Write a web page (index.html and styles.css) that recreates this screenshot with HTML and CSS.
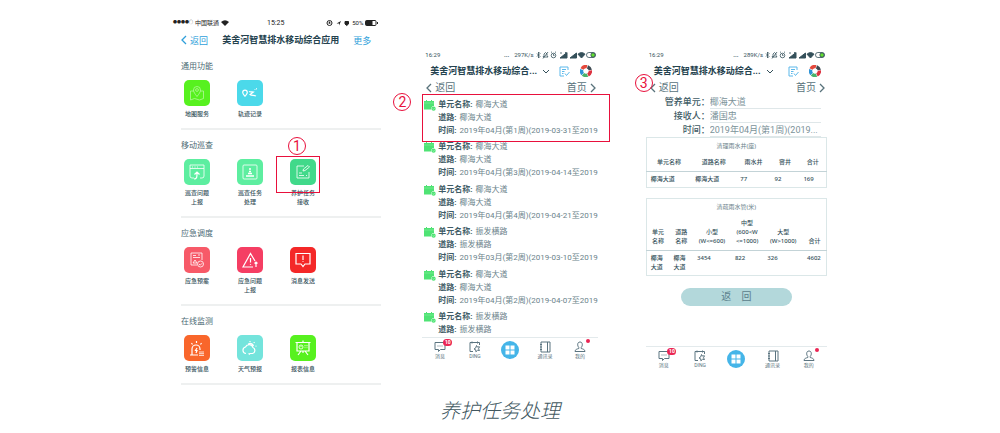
FILE: index.html
```html
<!DOCTYPE html>
<html lang="zh-CN">
<head>
  <meta charset="UTF-8">
  <meta name="viewport" content="width=device-width, initial-scale=1.0">
  <link rel="stylesheet" href="styles.css">
  <title>养护任务处理</title>
</head>
<body>
  <!-- 公用图标 -->
  <svg class="sprite" aria-hidden="true">
    <symbol id="i-left" viewBox="0 0 6 10"><path d="M5 1 1 5l4 4"/></symbol>
    <symbol id="i-right" viewBox="0 0 6 10"><path d="m1 1 4 4-4 4"/></symbol>
    <symbol id="i-down" viewBox="0 0 8 5"><path d="m1 1 3 3 3-3"/></symbol>
    <symbol id="i-wifi" viewBox="0 0 8 6"><path d="M4 6 0 2q4-3.600 8 0z" fill="currentColor" stroke="none"/></symbol>
    <symbol id="i-note" viewBox="0 0 11 11"><path d="M9 4V1H1v9h4M3 3.500h4M3 5.500h2.500M3 7.500h1.500M6 7.500l1.500 2L10.500 6"/></symbol>
    <symbol id="i-wheel" viewBox="0 0 12 12">
      <g fill="none" stroke-width="3.400">
        <path d="M2 4a4.400 4.400 0 0 1 5-2.300" stroke="#e4483b"/>
        <path d="M7.500 1.800A4.400 4.400 0 0 1 10.300 5" stroke="#3f4a52"/>
        <path d="M10.400 5.500A4.400 4.400 0 0 1 8 9.900" stroke="#dc3340"/>
        <path d="M7.500 10.200A4.400 4.400 0 0 1 3 9.300" stroke="#49b26b"/>
        <path d="M2.700 9A4.400 4.400 0 0 1 1.800 4.600" stroke="#2f94d6"/>
      </g>
    </symbol>
    <symbol id="i-signals" viewBox="0 0 60 8">
      <g fill="none" stroke="currentColor" stroke-width=".8">
        <path d="m1 2.500 3 3-1.500 1.500V1L4 2.500l-3 3"/>
        <path d="M7 6h5L11 4.500V3L9.500 1.500 8 3v1.500zM7 7.500 12 1"/>
        <circle cx="17.500" cy="4.500" r="2.300"/><path d="M17.500 3v1.500h1M15 1.500l1-.7M20 1.500l-1-.7"/>
        <path d="M24 2h2M29.500 1v1.500"/>
        <rect x="50.500" y="1.500" width="9" height="5" rx="2.400"/>
      </g>
      <path d="M24 7h7V1.500zM34 7h6.500V2z" fill="currentColor"/>
      <path d="M45.500 7 42 3.200q3.500-3.200 7 0z" fill="currentColor"/>
      <rect x="55" y="2" width="4" height="4" rx="1.500" fill="#62e02f"/>
    </symbol>
    <symbol id="i-calendar" viewBox="0 0 12 11">
      <path d="M0 1h2V0h1v1h4V0h1v1h2v5a2.500 2.500 0 0 0-2.500 3.500H0z" fill="#4fe374"/>
      <path d="M0 3h10" stroke="#8cf0a3" stroke-width=".6"/>
      <circle cx="9.600" cy="8.700" r="2.100" fill="#4fe374"/><path d="m8.700 8.700.7.700 1.200-1.300" fill="none" stroke="#d8ffe0" stroke-width=".5"/>
    </symbol>
    <symbol id="i-chat" viewBox="0 0 12 12"><path d="M1 1.500h10v7H6.500L4.500 10.500v-2H1z"/><path d="M3.500 5h1M5.500 5h1M7.500 5h1"/></symbol>
    <symbol id="i-ding" viewBox="0 0 12 12"><path d="M4 10.500H1v-9h9.500V4M3 .5v2M8.500 .5v2"/><path d="m7.500 4.500.8 1.500 2.200-.2-1 2 1 1.700-2-.2-1.600 1.500-.2-2-1.700-.8 1.700-1z"/></symbol>
    <symbol id="i-book" viewBox="0 0 12 12"><path d="M2 1h9v10H2zM8.500 1v10M1 3.500h2M1 6h2M1 8.500h2"/></symbol>
    <symbol id="i-user" viewBox="0 0 12 12"><path d="M6 1C3 1 3.300 5 4.800 6.500v1C3 8 1 8.500 1 10.500h10c0-2-2-2.500-3.800-3v-1C8.700 5 9 1 6 1z"/></symbol>
  </svg>

  <figure>
    <div class="screens">

      <!-- 第一步：应用首页 -->
      <section class="phone home">
        <div class="status">
          <span class="carrier"><i>●●●●○</i> 中国联通 <svg class="wifi"><use href="#i-wifi"/></svg></span>
          <span class="clock">15:25</span>
          <span class="power">
            <svg class="gps" viewBox="0 0 24 8"><circle cx="3.500" cy="4" r="2.500"/><path d="M2.500 4h2M3.500 2.500v2"/><path d="M10.500 4.500 15 2l-2 4.500V4.500z" fill="currentColor" stroke="none"/><path d="M19 2.500h3.500V5L20.700 6.500 19 5z" fill="currentColor"/></svg>
            50%
            <svg class="battery" viewBox="0 0 13 6"><rect x=".5" y=".5" width="10.500" height="5" rx="1"/><path d="M1 1h6v4H1z" fill="currentColor"/><path d="M12.500 2v2"/></svg>
          </span>
        </div>
        <header>
          <a href="#"><svg class="arrow"><use href="#i-left"/></svg>返回</a>
          <h1>美舍河智慧排水移动综合应用</h1>
          <a href="#">更多</a>
        </header>

        <div class="group">
          <h2>通用功能</h2>
          <div class="tiles">
            <a class="tile" href="#"><svg class="lime faint" viewBox="0 0 26 26"><path d="M10 11H6.500v9l4-1.500 5 1.500 4-1.500V11H16"/><path d="M13 16.500c-2-2.500-3.500-4.500-3.500-6.500a3.500 3.500 0 0 1 7 0c0 2-1.500 4-3.500 6.500z"/><circle cx="13" cy="10" r="1.400"/></svg>地图服务</a>
            <a class="tile" href="#"><svg class="sky" viewBox="0 0 26 26"><path class="thick" d="M8 16.500c-1.500-2-2.300-3-2.300-4a2.300 2.300 0 0 1 4.600 0c0 1-1 2-2.300 4M12 11.500c1.500.8 3 0 4.500.5L13 14.500c1.500 1.500 4 .5 6 1.500"/><path d="M17.500 9.500h1M19.500 8v1.500"/></svg>轨迹记录</a>
          </div>
        </div>

        <div class="group">
          <h2>移动巡查</h2>
          <div class="tiles">
            <a class="tile" href="#"><svg class="mint" viewBox="0 0 26 26"><path d="M10 19H8a2 2 0 0 1-2-2V6h14v11a2 2 0 0 1-2 2h-2M6 9.500h14M8 8h1M10.500 8h1M13 8h1"/><path class="thick" d="M10 20c3 0 3-2 3-6M10.500 15.500l2.500-2.500 2.500 2.500"/></svg>巡查问题<br>上报</a>
            <a class="tile" href="#"><svg class="mint" viewBox="0 0 26 26"><rect x="6" y="6" width="14" height="14" rx="1"/><path d="M13 9v2M12 12.500h2M11 14.500h4M9 17h8" stroke-width="1.500"/></svg>巡查任务<br>处理</a>
            <a class="tile marked" href="#"><svg class="jade" viewBox="0 0 26 26"><path d="M14 7H7v12h12v-6M9 14h3M9 16.500h5M16 16.500h1M13 12l.5-2L18 6.500l1.500 1.500-4.500 3.500z"/></svg>养护任务<br>接收<b class="step step-1">1</b></a>
          </div>
        </div>

        <div class="group">
          <h2>应急调度</h2>
          <div class="tiles">
            <a class="tile" href="#"><svg class="coral" viewBox="0 0 26 26"><path d="M13 18H7V6h11v7M9 8.500h3M14 8h2M9 10.500h7M9 16l2-3 2 3z"/><circle cx="16.500" cy="17" r="3"/><path d="m15 17 1.200 1.200 2-2"/></svg>应急预案</a>
            <a class="tile" href="#"><svg class="rose" viewBox="0 0 26 26"><path class="thick" d="M16 20H6l7.500-13.500L18 14M13.500 11v4.500M13.500 17.200v.8M19 20v-5M17.500 16.500 19 15l1.500 1.500"/></svg>应急问题<br>上报</a>
            <a class="tile" href="#"><svg class="red" viewBox="0 0 26 26"><path class="thick" d="M9 17H6V6.500h14V17h-5l-2 2.500L11 17H9M13 8.500v4.500M13 14.200v.8"/></svg>消息发送</a>
          </div>
        </div>

        <div class="group">
          <h2>在线监测</h2>
          <div class="tiles">
            <a class="tile" href="#"><svg class="orange" viewBox="0 0 26 26"><path class="thick" d="M6 20h8M8 20v-6a4 4 0 0 1 8 0v1M13 13l-1.500 2.500H13L12 18M12.500 6v2M7.500 8l1 1.500M17.500 8l-1 1.500"/><path d="M15 17h5M15 18.700h5M15 20.400h5"/></svg>预警信息</a>
            <a class="tile" href="#"><svg class="aqua" viewBox="0 0 26 26"><path class="thick" d="M9 18.500a3.300 3.300 0 0 1-.5-6.500 4 4 0 0 1 7.500.5 3.200 3.200 0 0 1-.5 6h-3M13 19.500l-1.500-1M11 9.500c2-2 5-1 5.500 1.500"/><path class="thick" d="M13 6v1M17.500 7l-.7 1M19.500 11l-1 .3"/></svg>天气预报</a>
            <a class="tile" href="#"><svg class="lime" viewBox="0 0 26 26"><path class="thick" d="M5.500 7.500h15M7 7.500V16h12V7.500M13 5.500v2M11 16l-3 4M15 16l3 4M13 16v2"/><circle cx="11" cy="12" r="2"/><path d="M11 12v-2M15 10v3.500M17 10v3.500" stroke-dasharray="1 .7"/></svg>报表信息</a>
          </div>
        </div>
      </section>

      <!-- 第二步：任务列表 -->
      <section class="phone tasks">
        <div class="status">
          <span>16:29</span>
          <span><b>...</b> 297K/s<svg class="signals"><use href="#i-signals"/></svg></span>
        </div>
        <header>
          <h1>美舍河智慧排水移动综合...</h1>
          <svg class="down"><use href="#i-down"/></svg>
          <svg class="note"><use href="#i-note"/></svg>
          <svg class="wheel"><use href="#i-wheel"/></svg>
        </header>
        <nav class="pager">
          <a href="#"><svg class="arrow"><use href="#i-left"/></svg>返回</a>
          <a href="#">首页<svg class="arrow"><use href="#i-right"/></svg></a>
        </nav>
        <div class="list-wrap">
          <b class="step step-2">2</b>
          <ul class="list">
            <li><svg><use href="#i-calendar"/></svg><p><b>单元名称:</b> 椰海大道</p><p><b>道路:</b> 椰海大道</p><p><b>时间:</b> 2019年04月(第1周)(2019-03-31至2019</p></li>
            <li><svg><use href="#i-calendar"/></svg><p><b>单元名称:</b> 椰海大道</p><p><b>道路:</b> 椰海大道</p><p><b>时间:</b> 2019年04月(第3周)(2019-04-14至2019</p></li>
            <li><svg><use href="#i-calendar"/></svg><p><b>单元名称:</b> 椰海大道</p><p><b>道路:</b> 椰海大道</p><p><b>时间:</b> 2019年04月(第4周)(2019-04-21至2019</p></li>
            <li><svg><use href="#i-calendar"/></svg><p><b>单元名称:</b> 振发横路</p><p><b>道路:</b> 振发横路</p><p><b>时间:</b> 2019年03月(第2周)(2019-03-10至2019</p></li>
            <li><svg><use href="#i-calendar"/></svg><p><b>单元名称:</b> 椰海大道</p><p><b>道路:</b> 椰海大道</p><p><b>时间:</b> 2019年04月(第2周)(2019-04-07至2019</p></li>
            <li><svg><use href="#i-calendar"/></svg><p><b>单元名称:</b> 振发横路</p><p><b>道路:</b> 振发横路</p></li>
          </ul>
        </div>
        <nav class="tabs">
          <a href="#"><svg><use href="#i-chat"/></svg>消息<em>10</em></a>
          <a href="#"><svg><use href="#i-ding"/></svg>DING</a>
          <a class="main" href="#" aria-label="工作"><svg viewBox="0 0 18 18"><path d="M4.500 4.500h4v4h-4zM9.500 4.500h4v4h-4zM4.500 9.500h4v4h-4zM9.500 9.500h4v4h-4z"/></svg></a>
          <a href="#"><svg><use href="#i-book"/></svg>通讯录</a>
          <a href="#"><svg><use href="#i-user"/></svg>我的<em class="dot"></em></a>
        </nav>
      </section>

      <!-- 第三步：任务详情 -->
      <section class="phone detail">
        <div class="status">
          <span>16:29</span>
          <span><b>...</b> 289K/s<svg class="signals"><use href="#i-signals"/></svg></span>
        </div>
        <header>
          <h1>美舍河智慧排水移动综合...</h1>
          <svg class="down"><use href="#i-down"/></svg>
          <svg class="note"><use href="#i-note"/></svg>
          <svg class="wheel"><use href="#i-wheel"/></svg>
        </header>
        <nav class="pager">
          <b class="step step-3">3</b>
          <a href="#"><svg class="arrow"><use href="#i-left"/></svg>返回</a>
          <a href="#">首页<svg class="arrow"><use href="#i-right"/></svg></a>
        </nav>
        <form>
          <label for="unit">管养单元：</label><input id="unit" type="text" value="椰海大道">
          <label for="receiver">接收人：</label><input id="receiver" type="text" value="潘国忠">
          <label for="time">时间：</label><input id="time" type="text" value="2019年04月(第1周)(2019...">
        </form>

        <table class="wells">
          <caption>清理雨水井(座)</caption>
          <colgroup><col class="w-name"><col class="w-name"><col class="w-rain"><col class="w-pit"><col></colgroup>
          <thead>
            <tr><th>单元名称</th><th>道路名称</th><th>雨水井</th><th>窨井</th><th>合计</th></tr>
          </thead>
          <tbody>
            <tr><td>椰海大道</td><td>椰海大道</td><td>77</td><td>92</td><td>169</td></tr>
          </tbody>
        </table>

        <table class="pipes">
          <caption>清疏雨水管(米)</caption>
          <colgroup><col class="p-name"><col class="p-name"><col class="p-small"><col class="p-mid"><col class="p-big"><col></colgroup>
          <thead>
            <tr><th>单元<br>名称</th><th>道路<br>名称</th><th>小型<br>(W&lt;=600)</th><th>中型<br>(600&lt;W<br>&lt;=1000)</th><th>大型<br>(W&gt;1000)</th><th>合计</th></tr>
          </thead>
          <tbody>
            <tr><td>椰海<br>大道</td><td>椰海<br>大道</td><td>3454</td><td>822</td><td>326</td><td>4602</td></tr>
          </tbody>
        </table>

        <button class="back" type="button">返&emsp;回</button>

        <nav class="tabs">
          <a href="#"><svg><use href="#i-chat"/></svg>消息<em>10</em></a>
          <a href="#"><svg><use href="#i-ding"/></svg>DING</a>
          <a class="main" href="#" aria-label="工作"><svg viewBox="0 0 18 18"><path d="M4.500 4.500h4v4h-4zM9.500 4.500h4v4h-4zM4.500 9.500h4v4h-4zM9.500 9.500h4v4h-4z"/></svg></a>
          <a href="#"><svg><use href="#i-book"/></svg>通讯录</a>
          <a href="#"><svg><use href="#i-user"/></svg>我的<em class="dot"></em></a>
        </nav>
      </section>

    </div>
    <figcaption>养护任务处理</figcaption>
  </figure>
</body>
</html>
```

FILE: styles.css
```css
* {
  box-sizing: border-box;
}

body {
  margin: 0;
  background: #fff;
  color: #34505a;
  font-family: Roboto, "Noto Sans CJK SC", sans-serif;
}

a {
  color: inherit;
  text-decoration: none;
}

h1, h2, p, ul, figure {
  margin: 0;
  padding: 0;
}

svg {
  fill: none;
  stroke: currentColor;
  flex: none;
}

.sprite {
  position: absolute;
  width: 0;
  height: 0;
}

.screens {
  display: grid;
  grid-template-columns: 208fr 175fr 188fr;
  column-gap: 41px;
  align-items: start;
  padding: 17px 17.3% 0;
}

.phone {
  min-width: 0;
}

.tasks, .detail {
  margin-top: 32px;
}

.detail {
  margin-left: 7px;
}

/* 状态栏和标题栏 */
.status {
  display: flex;
  justify-content: space-between;
  align-items: center;
  height: 12px;
  padding: 0 2px 0 3px;
  font-size: 6px;
  line-height: 12px;
  white-space: nowrap;
}

.status span {
  display: flex;
  align-items: center;
}

.status b {
  margin-right: 5px;
}

.signals {
  width: 60px;
  height: 8px;
  margin-left: 2px;
}

header {
  display: flex;
  align-items: center;
  height: 20px;
  padding: 0 6px 0 8px;
  white-space: nowrap;
}

h1 {
  font-size: 9px;
  line-height: 20px;
  font-weight: 700;
  color: #24424e;
}

.arrow {
  width: 6px;
  height: 10px;
  stroke-width: 1.3;
}

.down {
  width: 8px;
  height: 5px;
  margin-left: 5px;
}

.note {
  width: 11px;
  height: 11px;
  margin-left: auto;
  color: #5cb8ea;
}

.wheel {
  width: 12px;
  height: 12px;
  margin-left: 10px;
}

/* 应用首页 */
.home .status {
  color: #222;
  padding: 0 3px 0 0;
}

.home .status span {
  flex: 1;
  gap: 2px;
}

.home .status .clock {
  flex: none;
  font-size: 7px;
}

.home .status .power {
  justify-content: flex-end;
}

.carrier i {
  font-size: 4px;
  font-style: normal;
}

.wifi {
  width: 8px;
  height: 6px;
}

.gps {
  width: 24px;
  height: 8px;
}

.battery {
  width: 13px;
  height: 6px;
}

.home header {
  justify-content: space-between;
  height: 22px;
  padding: 0 10px 0 8px;
}

.home header a {
  display: flex;
  align-items: center;
  gap: 3px;
  font-size: 9px;
  color: #2f9fda;
}

.group {
  margin-left: 8px;
  padding: 11px 0 10px;
  border-bottom: 2px solid #eef0f0;
}

h2 {
  margin-bottom: 8px;
  font-size: 8px;
  line-height: 10px;
  font-weight: 400;
  color: #4c6a74;
}

.tiles {
  display: flex;
  gap: 27px;
  padding-left: 3px;
}

.tile {
  position: relative;
  width: 26px;
  font-size: 6px;
  line-height: 9px;
  font-weight: 500;
  text-align: center;
  white-space: nowrap;
}

.tile svg {
  display: block;
  width: 26px;
  height: 26px;
  margin-bottom: 3px;
  border-radius: 5px;
  stroke: #fff;
  stroke-width: 0.8;
}

.tile .faint {
  stroke: #b4f79a;
}

.thick {
  stroke-width: 1.2;
}

.lime { background: #57f11f; }
.sky { background: #4bd9ea; }
.mint { background: #5deea0; }
.jade { background: #41d98a; }
.coral { background: #f75a68; }
.rose { background: #f53e63; }
.red { background: #f42828; }
.orange { background: #f9662b; }
.aqua { background: #74e4dc; }

/* 红色标注 */
.marked::after,
.list-wrap::after {
  content: "";
  position: absolute;
  border: 1px solid #e8103c;
}

.marked::after {
  inset: -3px -4px 13px -14px;
}

.list-wrap::after {
  inset: -1px -12px auto 0;
  height: 46px;
}

.step {
  position: absolute;
  width: 18px;
  height: 18px;
  border: 1px solid #e8103c;
  border-radius: 50%;
  color: #e8103c;
  font-size: 14px;
  line-height: 16px;
  font-weight: 400;
  text-align: center;
}

.step-1 {
  top: -22px;
  left: -2px;
}

.step-2 {
  top: -2px;
  left: -29px;
}

.step-3 {
  top: -7px;
  left: -11px;
}

/* 返回、首页 */
.pager {
  position: relative;
  display: flex;
  justify-content: space-between;
  height: 14px;
  padding: 0 2px 0 4px;
  font-size: 10px;
  line-height: 14px;
  color: #58727b;
}

.pager a {
  display: flex;
  align-items: center;
  gap: 3px;
}

/* 任务列表 */
.list-wrap {
  position: relative;
}

.list {
  height: 242px;
  padding: 3px 0 0 16px;
  list-style: none;
}

.list li {
  position: relative;
  margin-bottom: 3px;
  font-size: 8px;
  line-height: 13px;
  color: #6b838b;
  white-space: nowrap;
}

.list li:nth-child(even) {
  margin-bottom: 4px;
}

.list b {
  margin-right: 1px;
  color: #3f5c66;
}

.list svg {
  position: absolute;
  top: 2px;
  left: -14px;
  width: 12px;
  height: 11px;
  stroke: none;
}

/* 底部导航 */
.tabs {
  display: grid;
  grid-template-columns: repeat(5, 1fr);
  height: 25px;
  border-top: 1px solid #e3eaec;
  font-size: 5px;
  line-height: 6px;
  color: #5b7480;
}

.tabs a {
  position: relative;
  display: flex;
  flex-direction: column;
  align-items: center;
  padding-top: 3px;
}

.tabs svg {
  width: 12px;
  height: 12px;
}

.tabs .main svg {
  width: 18px;
  height: 18px;
  border-radius: 50%;
  background: #45b5e8;
  fill: #fff;
  stroke: none;
}

.tabs em {
  position: absolute;
  top: 1px;
  left: 60%;
  width: 9px;
  height: 7px;
  border-radius: 4px;
  background: #ea2553;
  color: #fff;
  font-size: 5px;
  line-height: 7px;
  font-style: normal;
  font-weight: 700;
  text-align: center;
}

.tabs .dot {
  left: 66%;
  width: 4px;
  height: 4px;
}

/* 任务详情 */
form {
  display: grid;
  grid-template-columns: 64px 1fr;
  padding-right: 6px;
  font-size: 9px;
  line-height: 14px;
}

form label {
  height: 14px;
  text-align: right;
  font-weight: 500;
  color: #3f5c66;
}

form input {
  width: 100%;
  height: 14px;
  padding: 0;
  border: 0;
  border-bottom: 1px solid #dfe7e9;
  background: none;
  font: inherit;
  color: #7b9299;
}

table {
  width: 100%;
  table-layout: fixed;
  border-collapse: collapse;
  font-family: "Noto Sans", "Noto Sans CJK SC", sans-serif;
  font-size: 6px;
  line-height: 9px;
  color: #34505a;
  white-space: nowrap;
}

caption {
  padding: 4px 0;
  border: 1px solid #dbe7e8;
  border-bottom: 0;
  color: #6b838b;
}

tbody, thead {
  border: 1px solid #dbe7e8;
  border-top: 0;
}

th {
  padding: 3px 0 4px;
  border-bottom: 1px solid #c3d3d7;
  font-weight: 500;
  vertical-align: bottom;
}

td {
  padding: 3px 0 3px 4px;
  font-weight: 500;
  vertical-align: top;
}

.wells {
  margin-bottom: 10px;
}

.w-name { width: 25%; }
.w-rain { width: 19%; }
.w-pit { width: 16%; }

.p-name { width: 13%; }
.p-small { width: 21%; }
.p-mid { width: 18%; }
.p-big { width: 22%; }

.back {
  display: block;
  width: 61%;
  height: 18px;
  margin: 12px auto 40px;
  padding: 0;
  border: 0;
  border-radius: 9px;
  background: #b3d8db;
  color: #5b808b;
  font-family: inherit;
  font-size: 10px;
  line-height: 18px;
}

figcaption {
  margin-top: 13px;
  font-family: "Noto Sans CJK SC", sans-serif;
  font-size: 20px;
  line-height: 24px;
  font-weight: 300;
  font-style: italic;
  text-align: center;
  color: #41575f;
}
```
